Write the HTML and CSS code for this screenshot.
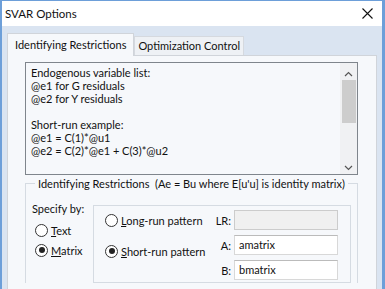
FILE: index.html
```html
<!DOCTYPE html>
<html lang="en">
<head>
  <meta charset="UTF-8">
  <title>SVAR Options</title>
  <link rel="stylesheet" href="styles.css">
</head>
<body>
  <div class="window">
    <div class="titlebar">
      <span class="title">SVAR Options</span>
      <svg class="close" width="11" height="11" viewBox="0 0 11 11">
        <path d="M0.5 0.5 L10.5 10.5 M10.5 0.5 L0.5 10.5" stroke="#111" stroke-width="1.1" fill="none"/>
      </svg>
    </div>

    <div class="client">
      <div class="tabs">
        <div class="tab active">Identifying Restrictions</div>
        <div class="tab">Optimization Control</div>
      </div>

      <div class="panel">
        <!-- help text box -->
        <div class="memo">
          <div class="memo-text">Endogenous variable list:
@e1 for G residuals
@e2 for Y residuals

Short-run example:
@e1 = C(1)*@u1
@e2 = C(2)*@e1 + C(3)*@u2</div>
          <div class="scrollbar">
            <svg class="arrow" width="9" height="6" viewBox="0 0 9 6"><path d="M1 5 L4.5 1.5 L8 5" stroke="#555" stroke-width="1.2" fill="none"/></svg>
            <div class="thumb"></div>
            <svg class="arrow down" width="9" height="6" viewBox="0 0 9 6"><path d="M1 1 L4.5 4.5 L8 1" stroke="#555" stroke-width="1.2" fill="none"/></svg>
          </div>
        </div>

        <fieldset class="group">
          <legend>Identifying Restrictions&nbsp; (Ae = Bu where E[u'u] is identity matrix)</legend>
          <div class="specify">
            <div class="specify-label">Specify by:</div>
            <label class="radio"><span class="dot"></span><span><u>T</u>ext</span></label>
            <label class="radio"><span class="dot checked"></span><span><u>M</u>atrix</span></label>
          </div>

          <div class="patterns">
            <label class="radio long"><span class="dot"></span><span><u>L</u>ong-run pattern</span></label>
            <span class="field-label">LR:</span>
            <div class="input disabled"></div>

            <label class="radio short"><span class="dot checked"></span><span><u>S</u>hort-run pattern</span></label>
            <span class="field-label">A:</span>
            <div class="input">amatrix</div>

            <span class="field-label">B:</span>
            <div class="input">bmatrix</div>
          </div>
        </fieldset>
      </div>
    </div>
  </div>
</body>
</html>
```

FILE: styles.css
```css
body {
  margin: 0;
  width: 385px;
  height: 289px;
  overflow: hidden;
  font-family: Lato, "Liberation Sans", sans-serif;
  font-size: 11px;
  color: #111;
}

.window {
  height: 289px;
  border-left: 2px solid #6d9fd9;
  border-right: 3px solid #6d9fd9;
  border-top: 1px solid #6d9fd9;
  background: #dae4f1;
  box-sizing: border-box;
}

.titlebar {
  height: 25px;
  background: #fff;
  display: flex;
  align-items: center;
  justify-content: space-between;
  padding: 0 9px 0 3px;
}

.title {
  font-size: 11.5px;
}

.client {
  padding: 7px 0 0 5px;
}

.tabs {
  display: flex;
  align-items: flex-end;
  height: 22px;
}

.tab {
  height: 19px;
  line-height: 18px;
  padding: 0 3px;
  background: #eef1f5;
  border: 1px solid #d5d9df;
  border-bottom: none;
  box-sizing: border-box;
  white-space: nowrap;
}

.tab.active {
  height: 23px;
  line-height: 22px;
  padding: 0 7px;
  background: #f6f8fb;
  margin-bottom: -1px;
  position: relative;
  z-index: 1;
  border-color: #d0d4da;
}

.panel {
  width: 370px;
  height: 240px;
  background: #f6f8fb;
  border: 1px solid #d0d4da;
  box-sizing: border-box;
  padding: 6px 0 0 17px;
}

.memo {
  width: 333px;
  height: 113px;
  border: 1px solid #7f858c;
  background: #f6f8fb;
  box-sizing: border-box;
  display: flex;
  justify-content: space-between;
}

.memo-text {
  white-space: pre;
  line-height: 13px;
  padding: 3px 0 0 5px;
}

.scrollbar {
  width: 17px;
  background: #f0f1f3;
  display: flex;
  flex-direction: column;
  align-items: center;
}

.arrow {
  margin-top: 8px;
}

.arrow.down {
  margin-top: auto;
  margin-bottom: 3px;
}

.thumb {
  width: 14px;
  height: 43px;
  margin-top: 3px;
  background: #cdcdcd;
}

.group {
  width: 333px;
  margin: 2px 0 0 0;
  padding: 12px 6px 0 6px;
  border: 1px solid #d5dbe2;
  border-bottom: none;
  box-sizing: border-box;
  display: flex;
  min-width: 0;
}

.group legend {
  padding: 0 3px;
  margin-left: 3px;
  white-space: nowrap;
}

.specify {
  width: 61px;
  display: flex;
  flex-direction: column;
}

.specify-label {
  line-height: 14px;
  margin-bottom: 4px;
}

.radio {
  display: flex;
  align-items: center;
  gap: 3px;
  height: 20px;
  white-space: nowrap;
  margin-left: 3px;
}

.dot {
  width: 11px;
  height: 11px;
  border: 1px solid #333;
  border-radius: 50%;
  background: #fff;
  position: relative;
  flex: none;
}

.dot.checked::after {
  content: "";
  position: absolute;
  left: 2.5px;
  top: 2.5px;
  width: 6px;
  height: 6px;
  border-radius: 50%;
  background: #222;
}

.patterns {
  width: 258px;
  height: 78px;
  margin-top: 3px;
  border: 1px solid #d5dbe2;
  box-sizing: border-box;
  display: grid;
  grid-template-columns: 1fr auto 104px;
  grid-template-rows: 20px 20px 20px;
  row-gap: 5px;
  column-gap: 3px;
  padding: 4px 12px 0 11px;
  align-items: center;
}

.patterns .radio {
  margin-left: 0;
}

.radio.short {
  grid-row: 2 / 4;
  align-self: start;
  margin-top: 6px;
}

.field-label {
  text-align: right;
  grid-column: 2;
}

.input {
  height: 20px;
  box-sizing: border-box;
  border: 1px solid #d8d8d8;
  border-top-color: #bbbbbb;
  background: #fff;
  line-height: 18px;
  padding-left: 4px;
  grid-column: 3;
}

.input.disabled {
  background: #f0f0f0;
  border-color: #cccccc;
}
```
